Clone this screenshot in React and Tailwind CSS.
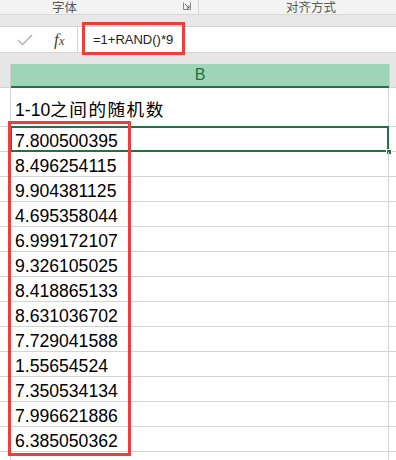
import React from "react";

const NUMBERS = [
  "7.800500395",
  "8.496254115",
  "9.904381125",
  "4.695358044",
  "6.999172107",
  "9.326105025",
  "8.418865133",
  "8.631036702",
  "7.729041588",
  "1.55654524",
  "7.350534134",
  "7.996621886",
  "6.385050362",
];

const Row = ({ children, selected, tall }) => (
  <div className={tall ? "flex h-[39px]" : "flex h-[25px]"}>
    <div className="w-[11px] border-r border-b border-[#d4d4d4] bg-white" />
    <div
      className={
        tall
          ? "relative w-[378px] border-r border-b border-[#d4d4d4] flex items-end pb-[5px] pl-[4px]"
          : "relative w-[378px] border-r border-b border-[#d4d4d4] pt-[3px] pl-[4px]"
      }
    >
      <span className="leading-[22px] text-[17.6px] text-black">{children}</span>
      {selected && (
        <>
          <div className="absolute -top-[1px] -left-[1px] -right-[1px] -bottom-[1px] border-2 border-[#217346]" />
          <div className="absolute -right-[4px] -bottom-[4px] w-[6px] h-[6px] bg-[#217346] border border-white" />
        </>
      )}
    </div>
    <div className="flex-1 border-b border-[#d4d4d4] bg-white" />
  </div>
);

export default function App() {
  return (
    <div
      className="relative w-[396px] h-[460px] overflow-hidden bg-white"
      style={{ fontFamily: '"Liberation Sans", "Noto Sans CJK SC", sans-serif' }}
    >
      {/* ribbon group labels */}
      <div className="flex h-[15px] bg-[#f3f3f3] border-b border-[#d8d8d8] text-[12.5px] text-[#5a5a5a] overflow-hidden">
        <div className="w-[199px] flex items-end border-r border-[#d8d8d8]">
          <span className="ml-[52px] leading-[12px] -mb-[0px]">字体</span>
          <div className="flex-1" />
          <svg width="8" height="8" viewBox="0 0 8 8" className="mr-[7px] mb-[4px]">
            <path d="M0.5 0.5V7.5H7.5V0.5" fill="none" stroke="#888" strokeWidth="1" />
            <path d="M2 2L6 6M6 3.5V6H3.5" fill="none" stroke="#666" strokeWidth="1" />
          </svg>
        </div>
        <div className="flex-1 flex items-end">
          <span className="ml-[87px] leading-[12px]">对齐方式</span>
        </div>
      </div>

      {/* spacer band */}
      <div className="h-[11px] bg-[#e8e8e8]" />

      {/* formula bar */}
      <div className="flex h-[27px] bg-white border-y border-[#d4d4d4]">
        <div className="w-[78px] flex items-center border-r border-[#d4d4d4]">
          <svg width="16" height="12" viewBox="0 0 16 12" className="ml-[17px]">
            <path d="M1 6L5.5 10.5L15 1" fill="none" stroke="#b8b8b8" strokeWidth="1.6" />
          </svg>
          <span
            className="ml-[21px] italic text-[17px] text-[#444] leading-none"
            style={{ fontFamily: '"Liberation Serif", serif' }}
          >
            f<span className="text-[13px]">x</span>
          </span>
        </div>
        <div className="flex-1 flex items-center pl-[15px] text-[13px] text-[#222]">
          =1+RAND()*9
        </div>
      </div>

      {/* gap */}
      <div className="h-[11px] bg-[#e6e6e6]" />

      {/* column header */}
      <div className="flex h-[24px]">
        <div className="w-[11px] bg-[#e6e6e6] border-r border-b border-[#d0d0d0]" />
        <div className="w-[378px] bg-[#9fd5b7] border-b-2 border-[#217346] flex items-center justify-center text-[16px] text-[#217346]">
          B
        </div>
        <div className="flex-1 bg-[#e6e6e6] border-l border-b border-[#d0d0d0]" />
      </div>

      <Row tall>
        1-10<span className="tracking-[1.5px]">之间的随机数</span>
      </Row>
      {NUMBERS.map((n, i) => (
        <Row key={i} selected={i === 0}>
          {n}
        </Row>
      ))}
      <Row> </Row>

      {/* red annotation boxes */}
      <div className="absolute left-[82px] top-[22px] w-[103px] h-[33px] border-[3px] border-[#f23b3b]" />
      <div className="absolute left-[8px] top-[121px] w-[123px] h-[335px] border-[3px] border-[#f23b3b]" />
    </div>
  );
}
